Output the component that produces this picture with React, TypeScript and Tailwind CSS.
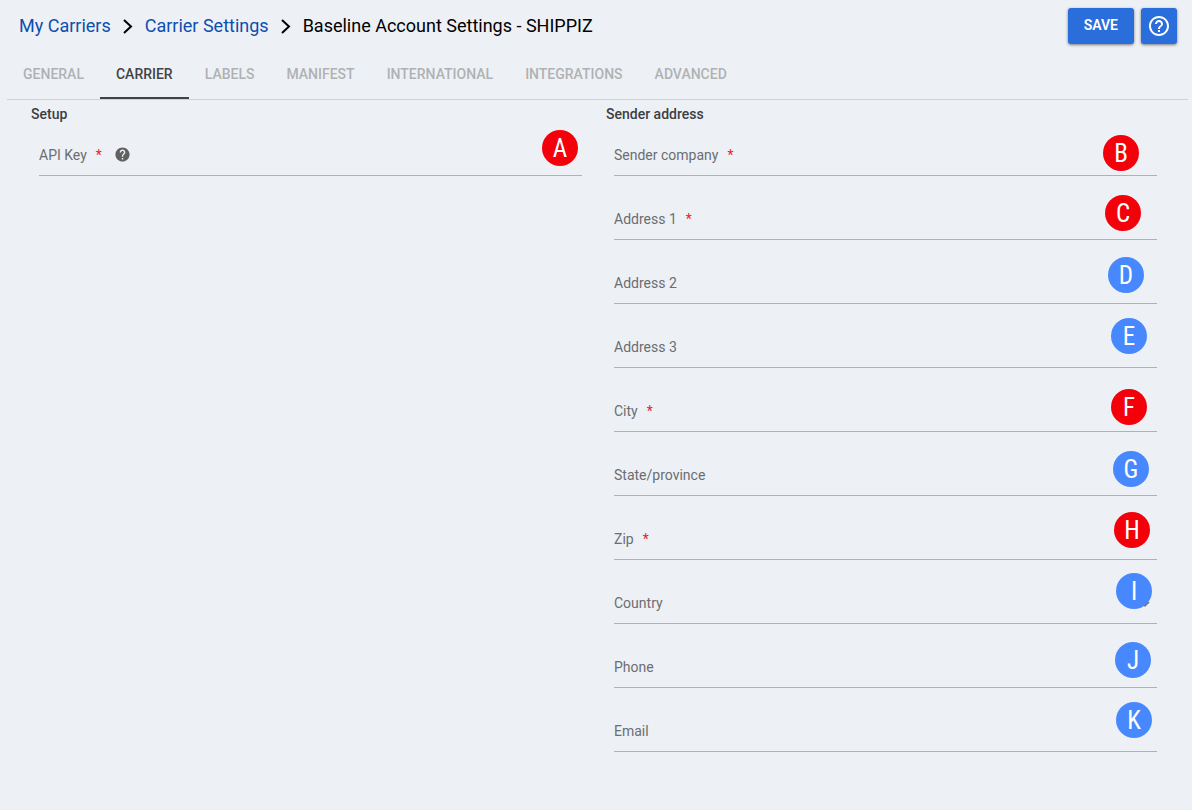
import React from "react";
import { MdHelp, MdHelpOutline } from "react-icons/md";

type Marker = { letter: string; tone: string; place: string };
type FieldProps = {
  id: string;
  label: string;
  marker: Marker;
  required?: boolean;
  help?: boolean;
  select?: boolean;
};

const RED = "bg-[#f3000b]";
const BLUE = "bg-[#4788ff]";

const tabs = ["GENERAL", "CARRIER", "LABELS", "MANIFEST", "INTERNATIONAL", "INTEGRATIONS", "ADVANCED"];

const setupFields: FieldProps[] = [
  { id: "api-key", label: "API Key", required: true, help: true, marker: { letter: "A", tone: RED, place: "right-[4px] top-[2px]" } },
];

const senderFields: FieldProps[] = [
  { id: "company", label: "Sender company", required: true, marker: { letter: "B", tone: RED, place: "right-[18px] top-[7px]" } },
  { id: "address1", label: "Address 1", required: true, marker: { letter: "C", tone: RED, place: "right-[16px] top-[3px]" } },
  { id: "address2", label: "Address 2", marker: { letter: "D", tone: BLUE, place: "right-[13px] top-[1px]" } },
  { id: "address3", label: "Address 3", marker: { letter: "E", tone: BLUE, place: "right-[10px] top-[-2px]" } },
  { id: "city", label: "City", required: true, marker: { letter: "F", tone: RED, place: "right-[10px] top-[5px]" } },
  { id: "state", label: "State/province", marker: { letter: "G", tone: BLUE, place: "right-[8px] top-[3px]" } },
  { id: "zip", label: "Zip", required: true, marker: { letter: "H", tone: RED, place: "right-[7px] top-0" } },
  { id: "country", label: "Country", select: true, marker: { letter: "I", tone: BLUE, place: "right-[5px] top-[-3px]" } },
  { id: "phone", label: "Phone", marker: { letter: "J", tone: BLUE, place: "right-[6px] top-[2px]" } },
  { id: "email", label: "Email", marker: { letter: "K", tone: BLUE, place: "right-[5px] top-[-2px]" } },
];

function Chevron() {
  return (
    <svg className="h-4 w-[10px] shrink-0" viewBox="0 0 10 16" fill="none" stroke="#000" strokeWidth="2" aria-hidden="true">
      <path d="M1 2l7 6.5L1 15" />
    </svg>
  );
}

function Field({ id, label, required, help, select, marker }: FieldProps) {
  return (
    <div className="relative flex h-12 items-center border-b border-[#adb2b9] pt-1.5">
      <label htmlFor={id} className="shrink-0 text-sm text-[#6b6d71]">
        {label}
        {required && <span className="ml-[9px] text-[#e8202c]">*</span>}
      </label>
      {help && (
        <button type="button" aria-label="About the API key" className="ml-3 shrink-0 text-[#616161]">
          <MdHelp size={17} />
        </button>
      )}
      {select ? (
        <>
          <select id={id} defaultValue="" className="h-full min-w-0 flex-1 appearance-none bg-transparent px-2 text-sm outline-none">
            <option value=""></option>
          </select>
          <svg className="mt-1 mr-[7px] h-[5px] w-[10px] shrink-0" viewBox="0 0 10 5" aria-hidden="true">
            <path d="M0 0h10L5 5z" fill="#757575" />
          </svg>
        </>
      ) : (
        <input id={id} type="text" required={required} className="h-full min-w-0 flex-1 bg-transparent px-2 text-sm shadow-none outline-none" />
      )}
      <span
        className={`pointer-events-none absolute flex size-9 items-center justify-center rounded-full pt-0.5 font-['Liberation_Sans_Narrow','Roboto_Condensed',Roboto,sans-serif] text-[25px] leading-9 text-white ${marker.tone} ${marker.place}`}
      >
        {marker.letter}
      </span>
    </div>
  );
}

function Section({ title, fields }: { title: string; fields: FieldProps[] }) {
  return (
    <section>
      <h2 className="flex h-7 items-center text-sm font-medium text-[#3c3e42]">{title}</h2>
      <div className="flex flex-col gap-4 pr-6 pl-2">
        {fields.map((field) => (
          <Field key={field.id} {...field} />
        ))}
      </div>
    </section>
  );
}

export default function App() {
  return (
    <div className="min-h-screen bg-[#edf1f6] font-[Roboto,sans-serif]">
      <header className="flex h-13 items-center justify-between pr-[15px] pl-[19px]">
        <nav aria-label="Breadcrumb" className="flex items-center gap-3 text-lg">
          <a href="#carriers" className="text-[#0d4eae]">My Carriers</a>
          <Chevron />
          <a href="#settings" className="text-[#0d4eae]">Carrier Settings</a>
          <Chevron />
          <h1 className="text-black">Baseline Account Settings - SHIPPIZ</h1>
        </nav>
        <div className="flex gap-[7px]">
          <button type="button" className="h-9 rounded-[3px] bg-[#2a6edb] px-4 pb-0.5 text-sm font-semibold text-white shadow-[0_1px_3px_rgba(0,0,0,0.5)]">
            SAVE
          </button>
          <button type="button" aria-label="Help" className="flex size-9 items-center justify-center rounded-[3px] bg-[#2a6edb] text-white shadow-[0_1px_3px_rgba(0,0,0,0.5)]">
            <MdHelpOutline size={24} />
          </button>
        </div>
      </header>
      <div role="tablist" className="mr-1 ml-[7px] flex h-12 border-b border-[#cfd3d8]">
        {tabs.map((tab) => (
          <button
            key={tab}
            type="button"
            role="tab"
            aria-selected={tab === "CARRIER"}
            className={`border-b-2 px-4 pb-0.5 text-sm font-medium ${tab === "CARRIER" ? "border-[#414347] text-[#414347]" : "border-transparent text-[#b0b1b3]"}`}
          >
            {tab}
          </button>
        ))}
      </div>
      <main className="grid grid-cols-2 pr-[11px] pl-[31px]">
        <Section title="Setup" fields={setupFields} />
        <Section title="Sender address" fields={senderFields} />
      </main>
    </div>
  );
}
